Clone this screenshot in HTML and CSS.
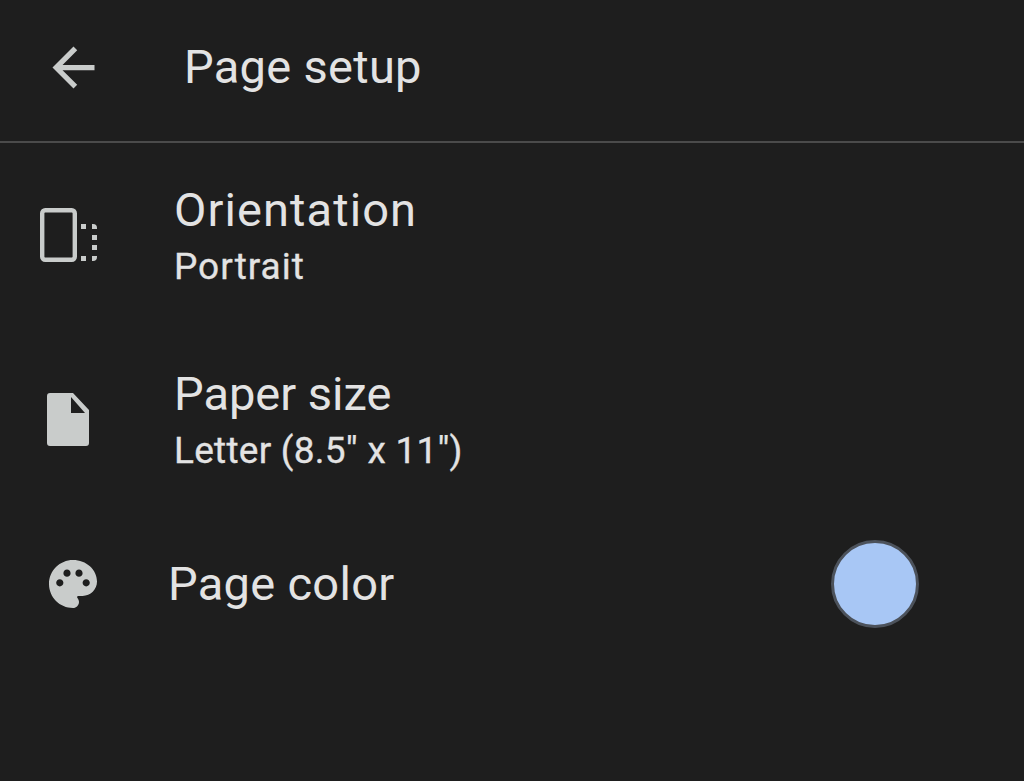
FILE: index.html
```html
<!DOCTYPE html>
<html lang="en">
<head>
<meta charset="utf-8">
<title>Page setup</title>
<link rel="stylesheet" href="styles.css">
</head>
<body>
<header class="app-bar">
  <svg class="back" viewBox="0 0 24 24"><path d="M20 11H7.83l5.59-5.59L12 4l-8 8 8 8 1.41-1.41L7.83 13H20v-2z"/></svg>
  <h1 class="title">Page setup</h1>
</header>
<main class="list">
  <div class="row row-orientation">
    <svg class="icon-orientation" viewBox="0 0 58 54">
      <rect class="outline" x="2.2" y="2.2" width="32.6" height="49.6" rx="3"/>
      <path d="M41 16h5v5h-5zM41 48h5v5h-5zM52 27h5v5h-5zM52 37h5v5h-5zM52 16h1a4 4 0 0 1 4 4v1h-5zM52 48h5v1a4 4 0 0 1-4 4h-1z"/>
    </svg>
    <div class="text">
      <div class="label label-wide">Orientation</div>
      <div class="value value-wide">Portrait</div>
    </div>
  </div>
  <div class="row row-paper">
    <svg class="icon-paper" viewBox="0 0 42 53"><path fill-rule="evenodd" d="M3 0H26L42 17V50a3 3 0 0 1-3 3H3a3 3 0 0 1-3-3V3a3 3 0 0 1 3-3zM24 4V20H38z"/></svg>
    <div class="text">
      <div class="label label-tight">Paper size</div>
      <div class="value value-tight">Letter (8.5" x 11")</div>
    </div>
  </div>
  <div class="row row-color">
    <svg class="icon-palette" viewBox="2 2 20 20"><path d="M12 2C6.49 2 2 6.49 2 12s4.49 10 10 10c1.38 0 2.5-1.12 2.5-2.5 0-.61-.23-1.2-.64-1.67-.08-.1-.13-.21-.13-.33 0-.28.22-.5.5-.5H16c3.31 0 6-2.69 6-6 0-4.96-4.49-9-10-9zm5.5 11c-.83 0-1.5-.67-1.5-1.5s.67-1.5 1.5-1.5 1.5.67 1.5 1.5-.67 1.5-1.5 1.5zm-3-4c-.83 0-1.5-.67-1.5-1.5S13.67 6 14.5 6s1.5.67 1.5 1.5S15.33 9 14.5 9zM5 11.5c0-.83.67-1.5 1.5-1.5s1.5.67 1.5 1.5S7.33 13 6.5 13 5 12.33 5 11.5zm6-4c0 .83-.67 1.5-1.5 1.5S8 8.33 8 7.5 8.67 6 9.5 6s1.5.67 1.5 1.5z"/></svg>
    <div class="label color-label">Page color</div>
    <div class="swatch"></div>
  </div>
</main>
</body>
</html>
```
FILE: styles.css
```css
html, body {
  margin: 0;
  height: 100%;
  overflow: hidden;
  background: #1e1e1e;
}
body {
  font-family: Roboto, "Open Sans", sans-serif;
  color: #e3e3e3;
}
svg {
  display: block;
  fill: #c9cccb;
  flex: none;
}
.app-bar {
  display: flex;
  align-items: center;
  height: 141px;
  padding-left: 42px;
  gap: 79px;
  border-bottom: 2px solid #4b4b4b;
}
.back {
  width: 63px;
  height: 63px;
  margin-top: -6px;
}
.title {
  margin: -8px 0 0;
  font-size: 47px;
  font-weight: 400;
  line-height: 56px;
  letter-spacing: 0.3px;
}
.list {
  display: flex;
  flex-direction: column;
}
.row {
  display: flex;
  align-items: center;
  height: 184px;
}
.row-orientation {
  padding-left: 40px;
  gap: 76px;
}
.icon-orientation {
  width: 58px;
  height: 54px;
}
.outline {
  fill: none;
  stroke: #c9cccb;
  stroke-width: 4.4;
}
.row-paper {
  padding-left: 47px;
  gap: 85px;
}
.icon-paper {
  width: 42px;
  height: 53px;
}
.row-color {
  height: 146px;
  padding-left: 49px;
  gap: 71px;
}
.icon-palette {
  width: 48px;
  height: 48px;
}
.label {
  font-size: 47px;
  line-height: 56px;
  letter-spacing: 0.3px;
}
.label-wide {
  letter-spacing: 1.1px;
}
.label-tight {
  letter-spacing: 0;
}
.value {
  margin-top: 7px;
  font-size: 37px;
  font-weight: 400;
  line-height: 44px;
  -webkit-text-stroke: 0.3px #e3e3e3;
}
.value-wide {
  letter-spacing: 1px;
}
.value-tight {
  letter-spacing: 0.25px;
}
.color-label {
  flex: 1;
}
.swatch {
  width: 82px;
  height: 82px;
  margin-right: 105px;
  border: 3px solid #4c525b;
  border-radius: 50%;
  background: #a8c7f5;
}
```
